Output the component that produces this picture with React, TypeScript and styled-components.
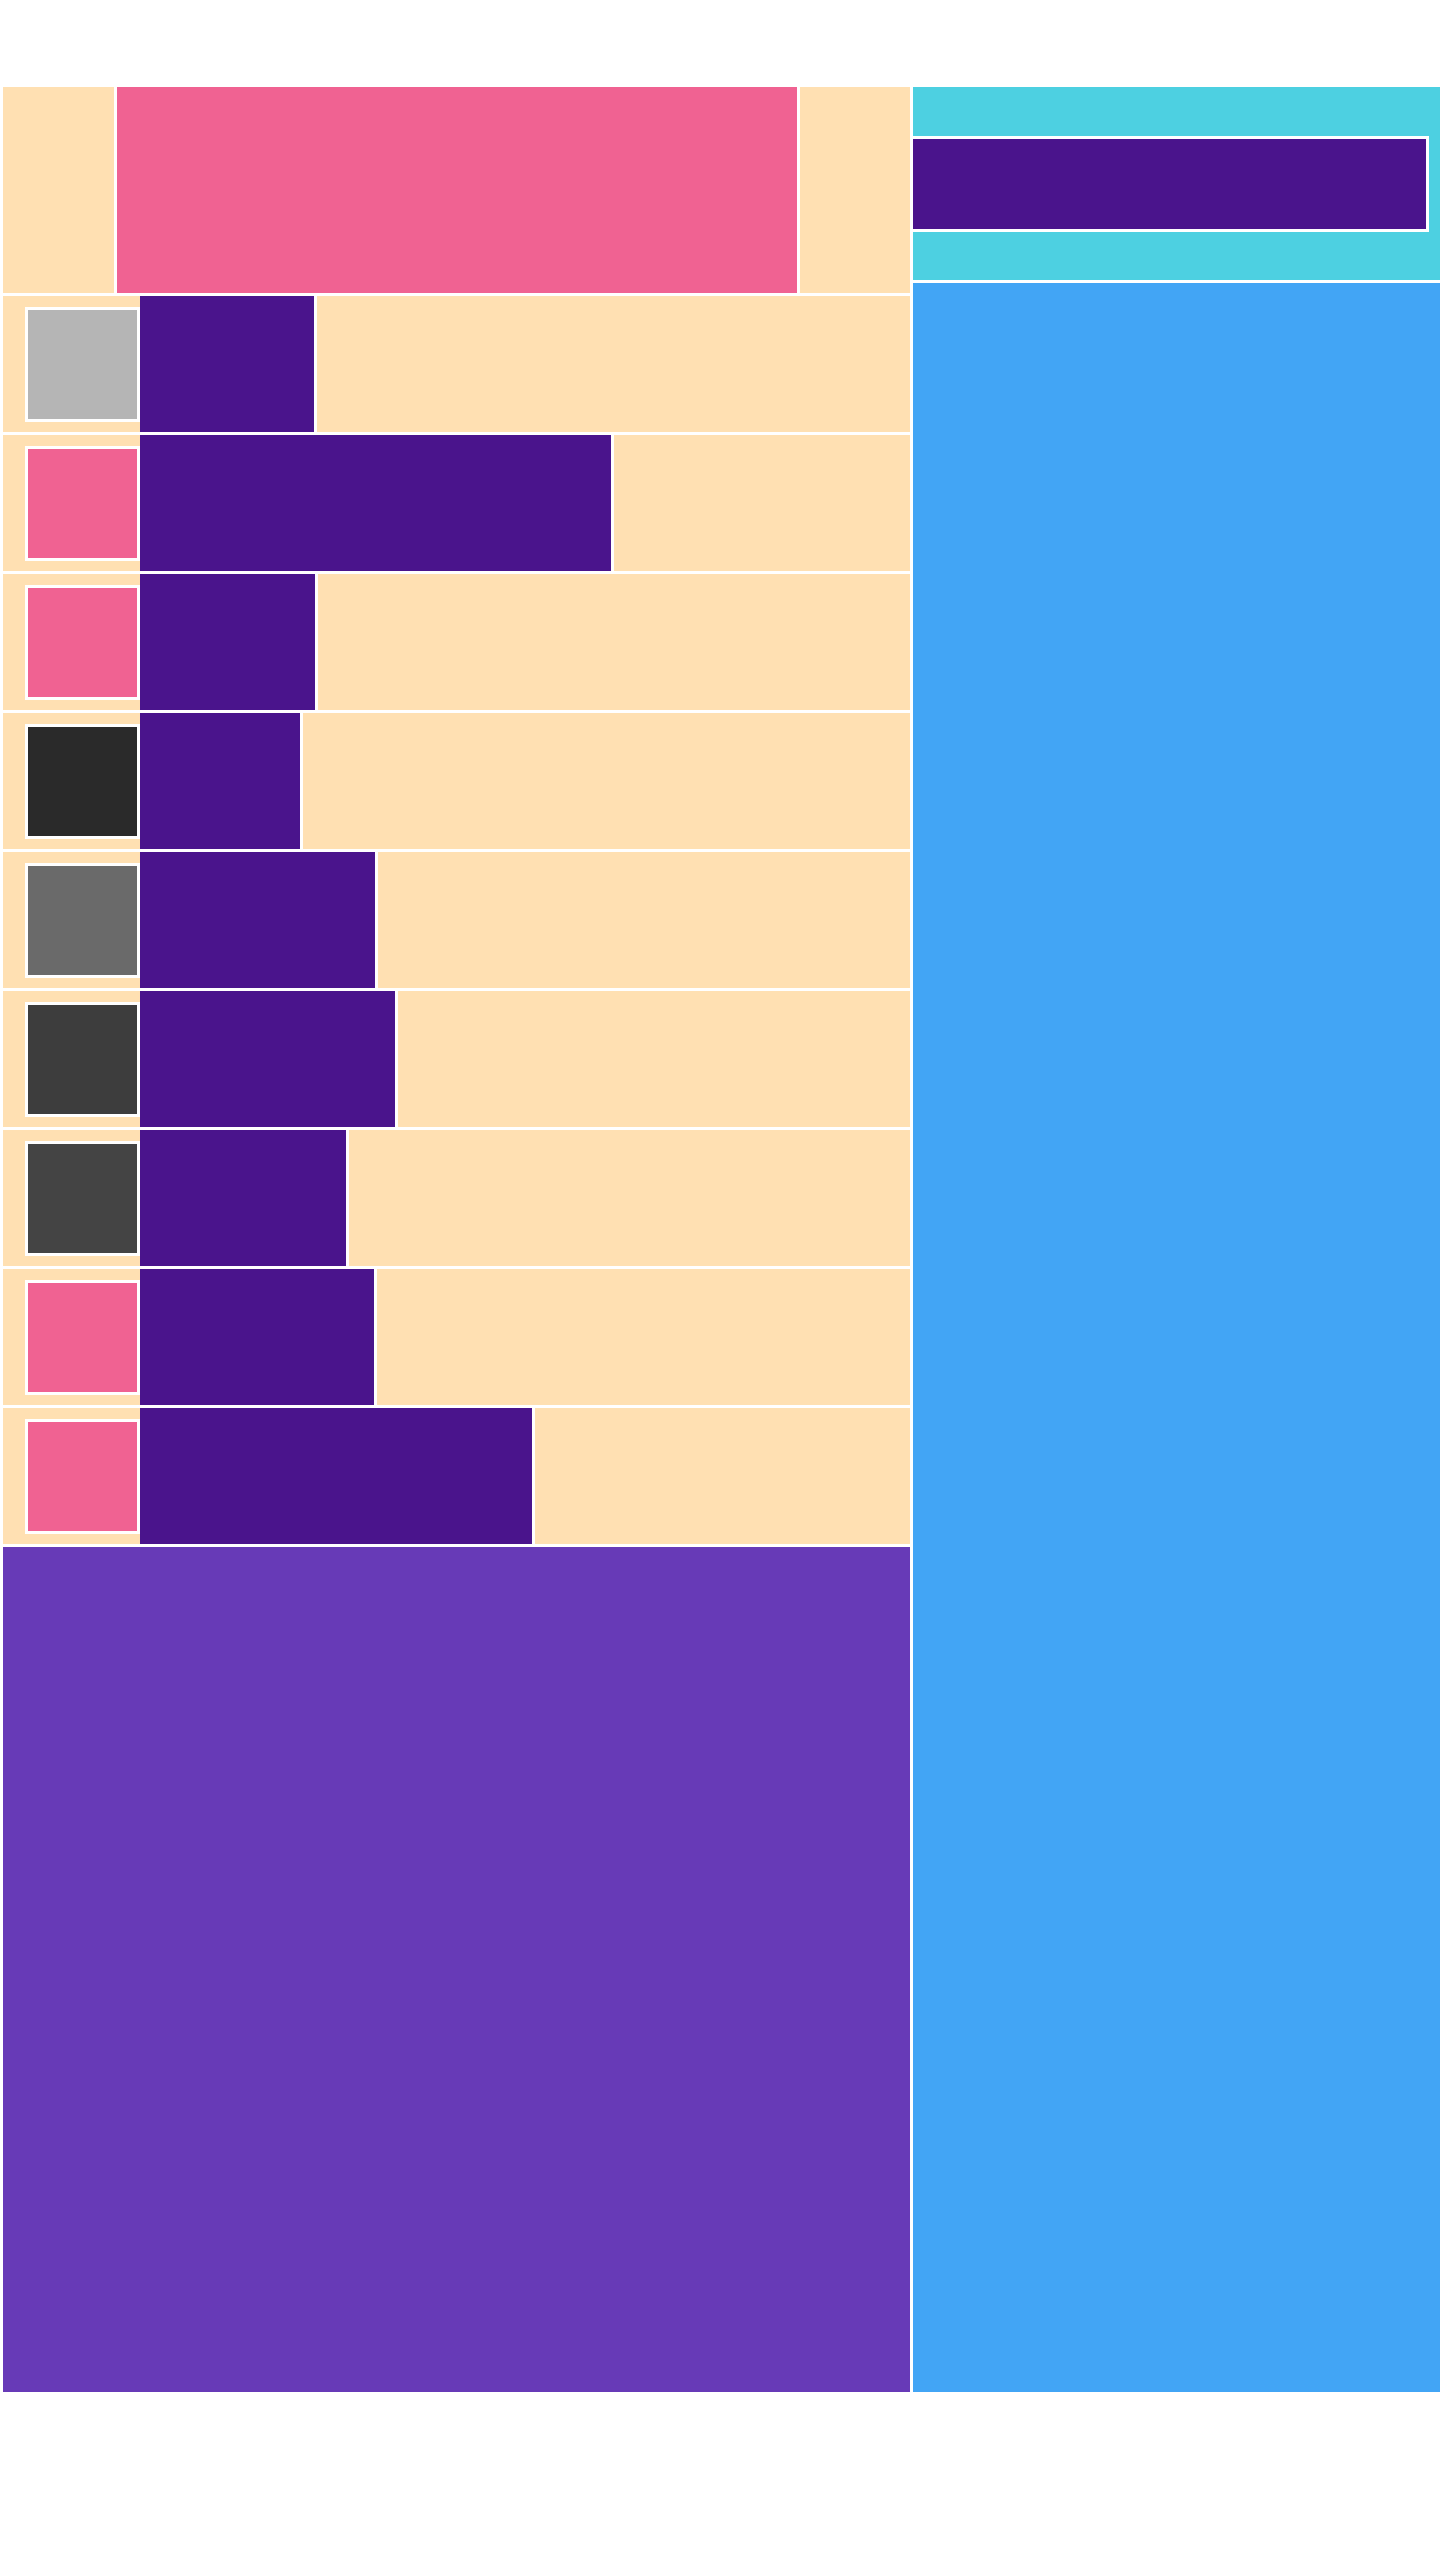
import React from "react"
import styled, { createGlobalStyle } from "styled-components"

const GlobalStyle = createGlobalStyle`
    html, body {
        margin: 0;
        padding: 0;
        background: #ffffff;
        font-family: "Liberation Sans", Arial, sans-serif;
    }
    * {
        box-sizing: border-box;
    }
`

const Page = styled.div`
    width: 1440px;
    padding: 87px 0 0 3px;
    display: flex;
    gap: 3px;
`

const LeftColumn = styled.div`
    width: 907px;
    display: flex;
    flex-direction: column;
    gap: 3px;
`

const RightColumn = styled.div`
    flex: 1;
    display: flex;
    flex-direction: column;
    gap: 3px;
`

const Hero = styled.div`
    height: 206px;
    background: #ffe0b2;
    display: flex;
    justify-content: center;
`

const HeroBanner = styled.div`
    width: 686px;
    background: #f06292;
    border-left: 3px solid #ffffff;
    border-right: 3px solid #ffffff;
`

const List = styled.div`
    display: flex;
    flex-direction: column;
    gap: 3px;
`

const Row = styled.div`
    height: 136px;
    background: #ffe0b2;
    display: flex;
    align-items: center;
    padding-left: 22px;
`

const Thumb = styled.div<{ $color: string }>`
    width: 115px;
    height: 115px;
    border: 3px solid #ffffff;
    background: ${(p) => p.$color};
    flex-shrink: 0;
`

const Label = styled.div<{ $width: number }>`
    align-self: stretch;
    width: ${(p) => p.$width + 3}px;
    background: #4a148c;
    border-right: 3px solid #ffffff;
    flex-shrink: 0;
`

const Footer = styled.div`
    height: 845px;
    background: #673ab7;
`

const SideHeader = styled.div`
    height: 193px;
    background: #4dd0e1;
    display: flex;
    align-items: center;
`

const SideBar = styled.div`
    width: 516px;
    height: 96px;
    background: #4a148c;
    border-top: 3px solid #ffffff;
    border-right: 3px solid #ffffff;
    border-bottom: 3px solid #ffffff;
`

const SidePanel = styled.div`
    height: 2109px;
    background: #42a5f5;
`

const rows = [
    { color: "#b5b5b5", width: 174 },
    { color: "#f06292", width: 471 },
    { color: "#f06292", width: 175 },
    { color: "#2a2a2a", width: 160 },
    { color: "#6a6a6a", width: 235 },
    { color: "#3d3d3d", width: 255 },
    { color: "#444444", width: 206 },
    { color: "#f06292", width: 234 },
    { color: "#f06292", width: 392 },
]

export default function App() {
    return (
        <>
            <GlobalStyle />
            <Page>
                <LeftColumn>
                    <Hero>
                        <HeroBanner />
                    </Hero>
                    <List>
                        {rows.map((r, i) => (
                            <Row key={i}>
                                <Thumb $color={r.color} />
                                <Label $width={r.width} />
                            </Row>
                        ))}
                    </List>
                    <Footer />
                </LeftColumn>
                <RightColumn>
                    <SideHeader>
                        <SideBar />
                    </SideHeader>
                    <SidePanel />
                </RightColumn>
            </Page>
        </>
    )
}
